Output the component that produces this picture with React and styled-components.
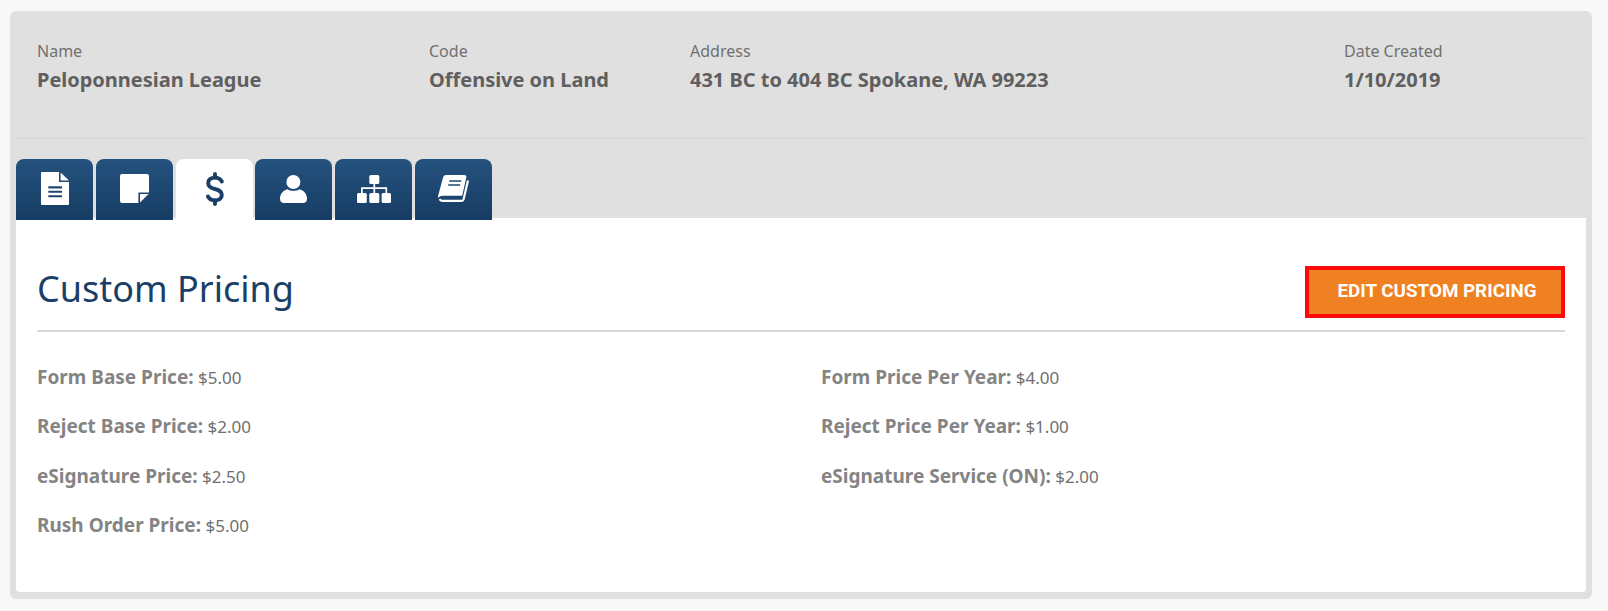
import React from 'react'
import styled, { createGlobalStyle } from 'styled-components'

const GlobalStyle = createGlobalStyle`
  html, body {
    margin: 0;
    background: #f8f8f8;
    font-family: "Noto Sans", "Open Sans", sans-serif;
  }
`

const Page = styled.div`
  padding: 11px 16px 12px 10px;
`

const Card = styled.div`
  background: #e0e0e0;
  border-radius: 6px;
  padding: 0 6px 7px;
`

const Summary = styled.div`
  display: flex;
  height: 128px;
  padding: 31px 0 0 21px;
  box-sizing: border-box;
  border-bottom: 2px solid #d8d8d8;
`

const Field = styled.div`
  width: ${props => props.$width}px;
`

const FieldLabel = styled.div`
  font-size: 16px;
  line-height: 18px;
  color: #707070;
`

const FieldValue = styled.div`
  margin-top: 6px;
  font-size: 20px;
  line-height: 28px;
  font-weight: 700;
  letter-spacing: -0.02px;
  color: #5f5f5f;
`

const TabBar = styled.div`
  display: flex;
  margin-top: 20px;
  position: relative;
  z-index: 1;
  margin-bottom: -2px;
`

const Tab = styled.div`
  width: 77px;
  height: 61px;
  margin-right: ${props => props.$active ? 2 : 3}px;
  display: flex;
  align-items: center;
  justify-content: center;
  padding-bottom: 2px;
  box-sizing: border-box;
  border-radius: 8px 8px 0 0;
  color: ${props => props.$active ? '#1b3f66' : '#fff'};
  background: ${props => props.$active ? '#fff' : 'linear-gradient(#24527e, #173c63)'};
`

const Panel = styled.div`
  background: #fff;
  border-radius: 0 0 4px 4px;
  padding: 48px 21px 0;
  height: 374px;
  box-sizing: border-box;
`

const PanelHeader = styled.div`
  display: flex;
  justify-content: space-between;
  align-items: flex-start;
  height: 66px;
  box-sizing: border-box;
  border-bottom: 2px solid #d8d8d8;
`

const Title = styled.h2`
  margin: 0;
  font-size: 36px;
  line-height: 46px;
  font-weight: 400;
  color: #1b3f66;
`

const EditButton = styled.button`
  width: 260px;
  height: 52px;
  padding: 0 0 2px 4px;
  border: 4px solid #ff0a0a;
  background: #ef8122;
  color: #fff;
  font-family: Roboto, sans-serif;
  font-size: 18.8px;
  font-weight: 700;
  text-transform: uppercase;
`

const PriceGrid = styled.div`
  display: grid;
  grid-template-columns: 784px 1fr;
  grid-auto-rows: 49.5px;
  margin-top: 20.5px;
`

const PriceRow = styled.div`
  font-size: 17px;
  line-height: 49px;
  color: #6f6f6f;
`

const PriceLabel = styled.b`
  font-size: 19px;
  color: #848484;
`

const FileIcon = () => (
  <svg width="28" height="33" viewBox="0 0 28 33" fill="currentColor">
    <path fillRule="evenodd" d="M1 0H18V10H28V32a1 1 0 0 1-1 1H1a1 1 0 0 1-1-1V1a1 1 0 0 1 1-1ZM7.3 14.3V16.5H21V14.3ZM7.3 18.7V20.8H21V18.7ZM7.3 23.2V25.3H21V23.2Z" />
    <path d="M19.6 0.5 28 8.4H19.6Z" />
  </svg>
)

const NoteIcon = () => (
  <svg width="29" height="29" viewBox="0 0 29 29" fill="currentColor">
    <path d="M2 0H27a2 2 0 0 1 2 2V18.4H18.4V29H2a2 2 0 0 1-2-2V2a2 2 0 0 1 2-2Z" />
    <path d="M20 20H28.6L20 28.6Z" />
  </svg>
)

const DollarIcon = () => (
  <svg width="18" height="34" viewBox="0 0 18 34" fill="none" stroke="currentColor" strokeWidth="3.9" strokeLinecap="round">
    <path d="M15.8 9.5C14.5 7 12 5.6 9 5.6C4.8 5.6 2.2 7.8 2.2 11.2C2.2 14.8 5 16 9 17C13 18 15.8 19.4 15.8 23C15.8 26.4 13 28.4 9 28.4C6 28.4 3.5 27.2 2 24.5" />
    <path d="M9 2V5.5M9 28.5V32" />
  </svg>
)

const UserIcon = () => (
  <svg width="27" height="28" viewBox="0 0 27 28" fill="currentColor">
    <circle cx="13.4" cy="7" r="7" />
    <path d="M0 23.5C0 18.5 3.5 15.2 7.5 14.2C9 15.2 11 15.8 13.5 15.8C16 15.8 18 15.2 19.5 14.2C23.5 15.2 27 18.5 27 23.5C27 26.5 25.5 28 23 28H4C1.5 28 0 26.5 0 23.5Z" />
  </svg>
)

const SitemapIcon = () => (
  <svg width="34" height="28" viewBox="0 0 34 28" fill="currentColor">
    <rect x="12.3" y="0" width="10" height="9" rx="1.5" />
    <rect x="0" y="18" width="9.8" height="10" rx="1.5" />
    <rect x="12.3" y="18" width="10" height="10" rx="1.5" />
    <rect x="24.6" y="18" width="9.4" height="10" rx="1.5" />
    <path d="M17.3 9V18M4.9 18V13.2H29.3V18" fill="none" stroke="currentColor" strokeWidth="1.7" />
  </svg>
)

const BookIcon = () => (
  <svg width="31" height="27" viewBox="0 0 31 27" fill="currentColor">
    <path d="M8 0H26.3C27.8 0 28.7 1 28.3 2.4L24.2 20.8H4.8C3 20.8 1.4 21.5 0.3 23C0.1 22.3 0 21.5 0.2 20.5L4.9 3C5.4 1.2 6.4 0 8 0Z" />
    <path d="M30 5.5L25.6 24.2C25.3 25.3 24.7 25.8 23.8 25.8H4.5C3 25.8 2 25.2 1.6 24.2" fill="none" stroke="currentColor" strokeWidth="2.2" />
    <path d="M11.3 6H23.3M10.2 10H22.2" fill="none" stroke="#1f4a75" strokeWidth="1.7" />
  </svg>
)

const tabs = [FileIcon, NoteIcon, DollarIcon, UserIcon, SitemapIcon, BookIcon]

const fields = [
  { label: 'Name', value: 'Peloponnesian League', width: 392 },
  { label: 'Code', value: 'Offensive on Land', width: 261 },
  { label: 'Address', value: '431 BC to 404 BC Spokane, WA 99223', width: 654 },
  { label: 'Date Created', value: '1/10/2019', width: 200 },
]

const prices = [
  ['Form Base Price:', '$5.00'],
  ['Form Price Per Year:', '$4.00'],
  ['Reject Base Price:', '$2.00'],
  ['Reject Price Per Year:', '$1.00'],
  ['eSignature Price:', '$2.50'],
  ['eSignature Service (ON):', '$2.00'],
  ['Rush Order Price:', '$5.00'],
]

export default function App() {
  return (
    <Page>
      <GlobalStyle />
      <Card>
        <Summary>
          {fields.map(f => (
            <Field key={f.label} $width={f.width}>
              <FieldLabel>{f.label}</FieldLabel>
              <FieldValue>{f.value}</FieldValue>
            </Field>
          ))}
        </Summary>
        <TabBar>
          {tabs.map((Icon, i) => (
            <Tab key={i} $active={i === 2}><Icon /></Tab>
          ))}
        </TabBar>
        <Panel>
          <PanelHeader>
            <Title>Custom Pricing</Title>
            <EditButton>Edit Custom Pricing</EditButton>
          </PanelHeader>
          <PriceGrid>
            {prices.map(([label, value]) => (
              <PriceRow key={label}>
                <PriceLabel>{label}</PriceLabel> {value}
              </PriceRow>
            ))}
          </PriceGrid>
        </Panel>
      </Card>
    </Page>
  )
}
